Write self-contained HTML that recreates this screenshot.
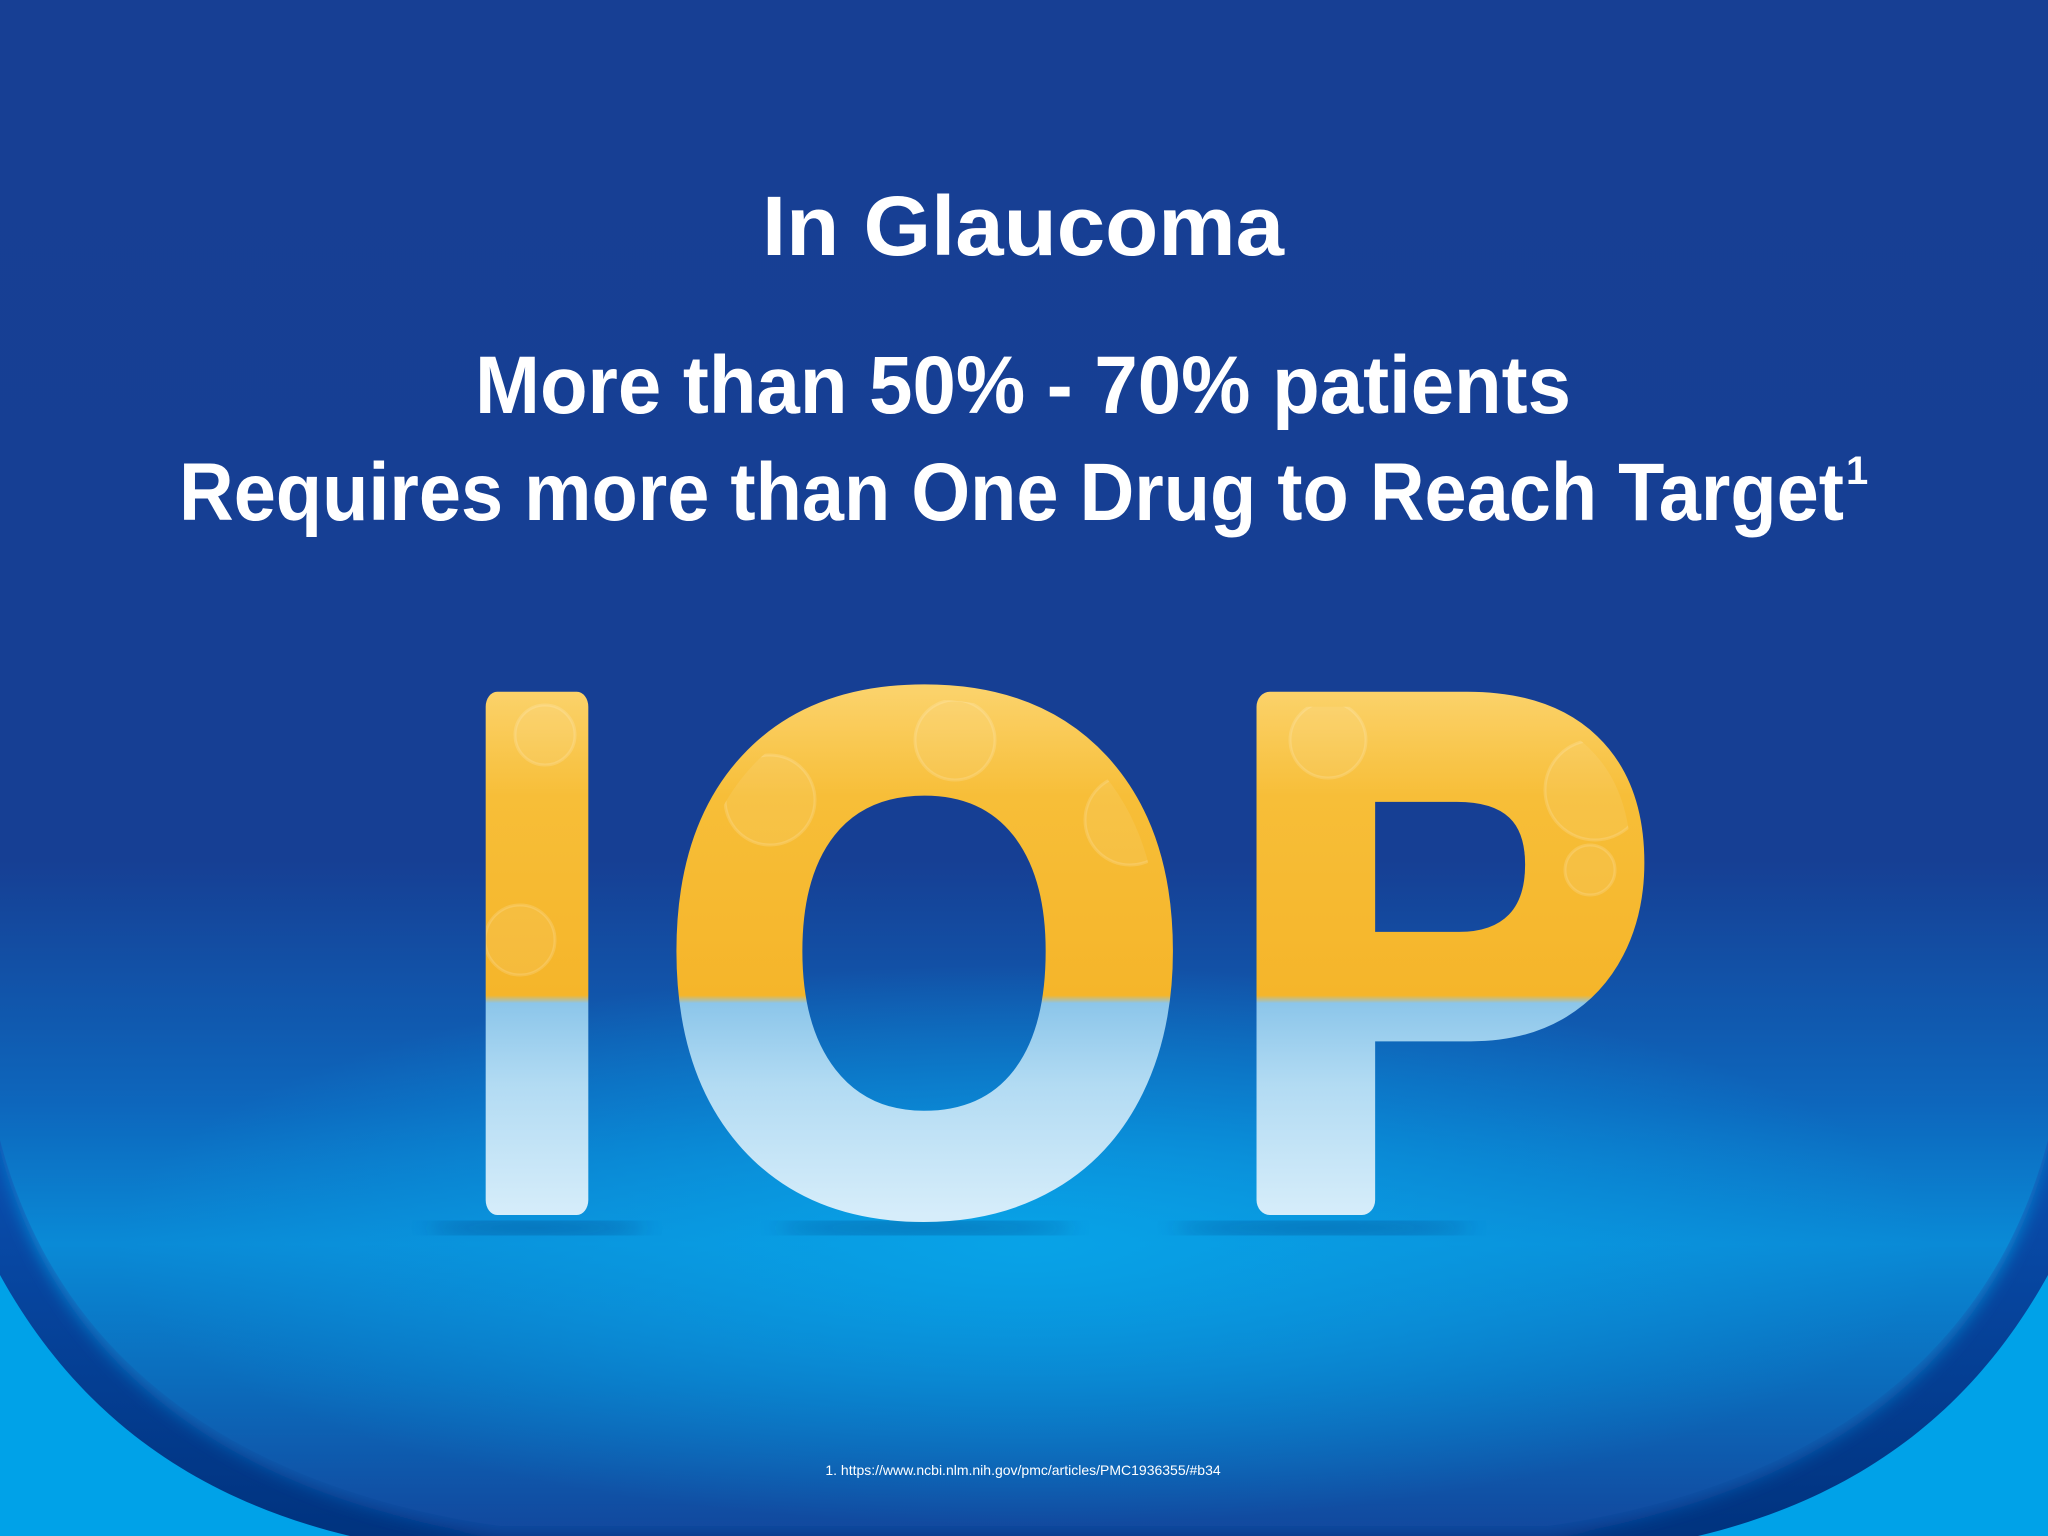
<!DOCTYPE html>
<html><head><meta charset="utf-8"><style>
html,body{margin:0;padding:0;width:2048px;height:1536px;overflow:hidden;background:#00a2e8}
svg{display:block}
</style></head><body>
<svg width="2048" height="1536" viewBox="0 0 2048 1536" xmlns="http://www.w3.org/2000/svg">
<defs>
<linearGradient id="bg" x1="0" y1="0" x2="0" y2="1536" gradientUnits="userSpaceOnUse">
<stop offset="0" stop-color="#173f94"/>
<stop offset="0.56" stop-color="#163f94"/>
<stop offset="0.72" stop-color="#0d67bd"/>
<stop offset="0.81" stop-color="#0a8ad6"/>
<stop offset="0.9" stop-color="#0b6cbc"/>
<stop offset="1" stop-color="#12479d"/>
</linearGradient>
<radialGradient id="glow" cx="1024" cy="1245" r="700" gradientUnits="userSpaceOnUse" gradientTransform="translate(1024 1245) scale(1.3 0.4) translate(-1024 -1245)">
<stop offset="0" stop-color="#08a4e8" stop-opacity="0.95"/>
<stop offset="1" stop-color="#08a4e8" stop-opacity="0"/>
</radialGradient>
<linearGradient id="rim" x1="0" y1="1150" x2="0" y2="1536" gradientUnits="userSpaceOnUse">
<stop offset="0" stop-color="#0a4fb0"/>
<stop offset="1" stop-color="#00337f"/>
</linearGradient>
<linearGradient id="fillL" x1="0" y1="692" x2="0" y2="1215" gradientUnits="userSpaceOnUse">
<stop offset="0" stop-color="#fbd26a"/>
<stop offset="0.2" stop-color="#f7be38"/>
<stop offset="0.58" stop-color="#f5b52a"/>
<stop offset="0.595" stop-color="#8cc6ea"/>
<stop offset="0.75" stop-color="#b2dbf3"/>
<stop offset="1" stop-color="#d6edfa"/>
</linearGradient>
<clipPath id="lc">
<rect x="486" y="692" width="102" height="523"/>
<text x="0" y="1200" transform="translate(925 0) scale(0.94 1)" font-family="Liberation Sans, Arial, sans-serif" font-weight="bold" font-size="717" text-anchor="middle">O</text>
<text x="0" y="1200" transform="translate(1440 0) scale(0.89 1)" font-family="Liberation Sans, Arial, sans-serif" font-weight="bold" font-size="717" text-anchor="middle">P</text>
</clipPath>
<filter id="blur"><feGaussianBlur stdDeviation="10"/></filter>
<filter id="blur2"><feGaussianBlur stdDeviation="8"/></filter>
</defs>
<rect width="2048" height="1536" fill="#00a2e8"/>
<path d="M0 0 H2048 V1275 C1968 1420 1848 1500 1698 1536 H350 C200 1500 80 1420 0 1275 Z" fill="url(#rim)"/>
<path d="M0 0 H2048 V1150 C1988 1380 1798 1500 1548 1536 H500 C250 1500 60 1380 0 1150 Z" fill="url(#bg)" filter="url(#blur2)"/>
<path d="M0 0 H2048 V1140 C1988 1370 1798 1490 1548 1526 H500 C250 1490 60 1370 0 1140 Z" fill="url(#bg)"/>
<path d="M0 0 H2048 V1140 C1988 1370 1798 1490 1548 1526 H500 C250 1490 60 1370 0 1140 Z" fill="url(#glow)"/>
<g fill="#ffffff" font-family="Liberation Sans, Arial, sans-serif" font-weight="bold" text-anchor="start">
<text x="762" y="255" font-size="84" textLength="522" lengthAdjust="spacingAndGlyphs">In Glaucoma</text>
<text x="475" y="413" font-size="82" textLength="1096" lengthAdjust="spacingAndGlyphs">More than 50% - 70% patients</text>
<text x="179" y="520" font-size="82" textLength="1665" lengthAdjust="spacingAndGlyphs">Requires more than One Drug to Reach Target</text>
<text x="1846" y="484" font-size="40">1</text>
</g>
<g fill="#0a2f70" opacity="0.55" filter="url(#blur)">
<ellipse cx="537" cy="1228" rx="110" ry="6"/>
<ellipse cx="925" cy="1228" rx="150" ry="6"/>
<ellipse cx="1322" cy="1228" rx="150" ry="6"/>
</g>
<g font-family="Liberation Sans, Arial, sans-serif" font-weight="bold" font-size="717" fill="url(#fillL)" stroke="url(#fillL)" stroke-width="30" stroke-linejoin="round" text-anchor="middle">
<text x="0" y="1200" transform="translate(537 0) scale(0.77 1)">I</text>
<text x="0" y="1200" transform="translate(925 0) scale(0.94 1)">O</text>
<text x="0" y="1200" transform="translate(1440 0) scale(0.89 1)">P</text>
</g>
<g clip-path="url(#lc)" fill="#ffffff" fill-opacity="0.08" stroke="#ffffff" stroke-opacity="0.15" stroke-width="3">
<circle cx="545" cy="735" r="30"/>
<circle cx="770" cy="800" r="45"/>
<circle cx="955" cy="740" r="40"/>
<circle cx="1130" cy="820" r="45"/>
<circle cx="1328" cy="740" r="38"/>
<circle cx="1595" cy="790" r="50"/>
<circle cx="520" cy="940" r="35"/>
<circle cx="1590" cy="870" r="25"/>
</g>
<text x="1023" y="1475" fill="#ffffff" font-family="Liberation Sans, Arial, sans-serif" font-size="14" text-anchor="middle">1. https://www.ncbi.nlm.nih.gov/pmc/articles/PMC1936355/#b34</text>
</svg>
</body></html>
